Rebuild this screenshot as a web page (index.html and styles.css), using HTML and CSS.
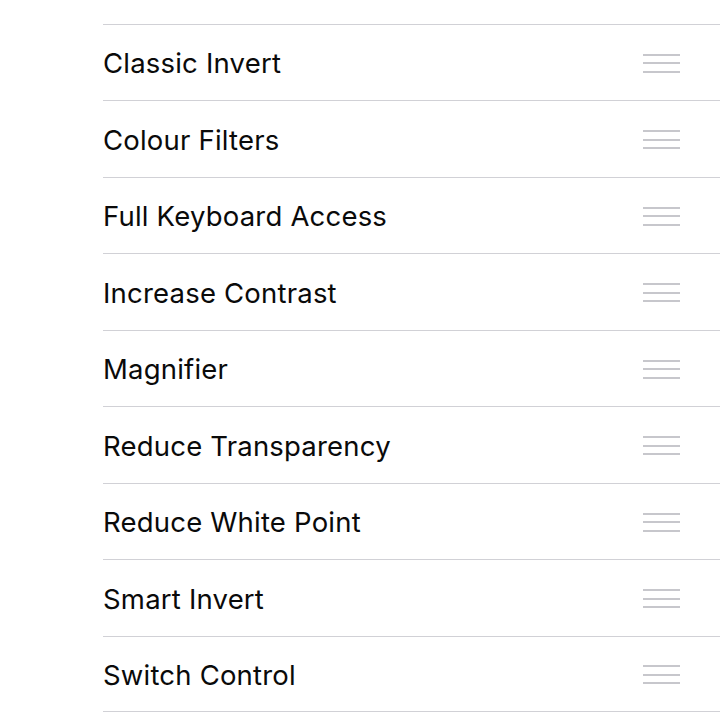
FILE: index.html
```html
<!DOCTYPE html>
<html>
<head>
<meta charset="utf-8">
<link rel="stylesheet" href="styles.css">
</head>
<body>
<div class="list">
  <div class="row"><span class="label">Classic Invert</span><span class="grip"><i></i><i></i><i></i></span></div>
  <div class="row"><span class="label">Colour Filters</span><span class="grip"><i></i><i></i><i></i></span></div>
  <div class="row"><span class="label">Full Keyboard Access</span><span class="grip"><i></i><i></i><i></i></span></div>
  <div class="row"><span class="label">Increase Contrast</span><span class="grip"><i></i><i></i><i></i></span></div>
  <div class="row"><span class="label">Magnifier</span><span class="grip"><i></i><i></i><i></i></span></div>
  <div class="row"><span class="label">Reduce Transparency</span><span class="grip"><i></i><i></i><i></i></span></div>
  <div class="row"><span class="label">Reduce White Point</span><span class="grip"><i></i><i></i><i></i></span></div>
  <div class="row"><span class="label">Smart Invert</span><span class="grip"><i></i><i></i><i></i></span></div>
  <div class="row"><span class="label">Switch Control</span><span class="grip"><i></i><i></i><i></i></span></div>
</div>
</body>
</html>
```
FILE: styles.css
```css
html, body {
  margin: 0;
  padding: 0;
  background: #ffffff;
}
body {
  font-family: "Inter", "Liberation Sans", sans-serif;
  width: 720px;
  height: 720px;
  overflow: hidden;
}
.list {
  margin-left: 103px;
  padding-top: 23.5px;
}
.row {
  box-sizing: border-box;
  height: 76.5px;
  border-top: 1px solid #d1d1d6;
  display: flex;
  align-items: center;
  justify-content: space-between;
  padding-right: 40px;
  padding-top: 2px;
}
.row:last-child {
  border-bottom: 1px solid #d1d1d6;
}
.label {
  font-size: 27.5px;
  color: #0a0a0a;
  letter-spacing: 0.2px;
}
.grip {
  display: flex;
  flex-direction: column;
  gap: 6.3px;
  width: 37px;
}
.grip i {
  display: block;
  height: 2px;
  background: #c7c7cc;
}
```
